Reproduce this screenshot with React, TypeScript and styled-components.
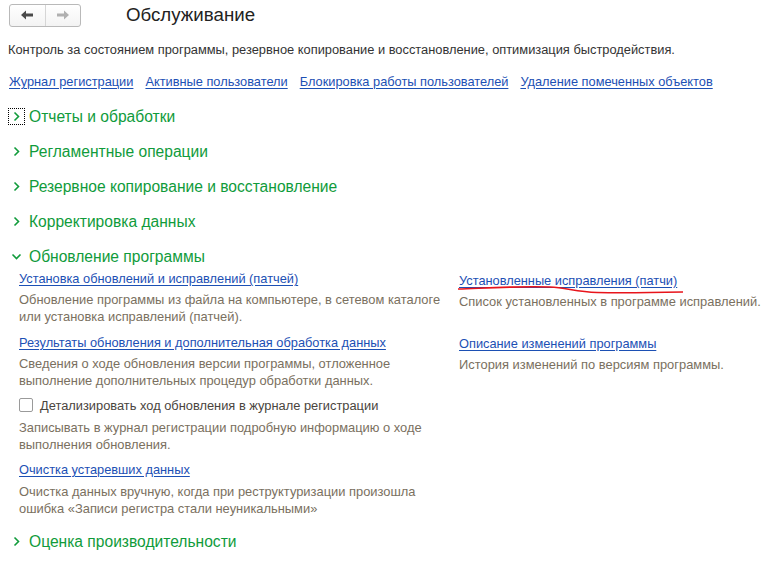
import React from "react";
import styled, { createGlobalStyle } from "styled-components";

const Global = createGlobalStyle`
  html, body { margin: 0; padding: 0; background: #fff; }
  body { font-family: Arial, "Liberation Sans", sans-serif; color: #333; }
`;

const Page = styled.div`
  width: 772px;
  height: 567px;
  overflow: hidden;
  position: relative;
  box-sizing: border-box;
  padding: 3px 0 0 8px;
`;

const Header = styled.div`
  display: flex;
  align-items: center;
  height: 24px;
`;

const NavGroup = styled.div`
  display: flex;
  width: 72px;
  height: 23px;
  margin-left: 1px;
  border: 1px solid #b9b9b9;
  border-radius: 3px;
  box-sizing: border-box;
  background: linear-gradient(#ffffff, #f3f3f3);
`;

const NavBtn = styled.div<{ $divider?: boolean }>`
  flex: 1;
  display: flex;
  align-items: center;
  justify-content: center;
  border-left: ${(p) => (p.$divider ? "1px solid #d6d6d6" : "none")};
`;

const Title = styled.div`
  margin-left: 45px;
  font-size: 18.7px;
  color: #222;
  line-height: 24px;
`;

const Intro = styled.div`
  margin-top: 15px;
  font-size: 12.85px;
  color: #333;
  line-height: 16px;
`;

const LinkRow = styled.div`
  display: flex;
  gap: 12px;
  margin-top: 16px;
  margin-left: 1px;
`;

const Link = styled.a`
  font-size: 12.8px;
  color: #1c50b4;
  text-decoration: underline;
  text-underline-offset: 2px;
  line-height: 16px;
  cursor: pointer;
  white-space: nowrap;
`;

const Groups = styled.div`
  margin-top: 9px;
  display: flex;
  flex-direction: column;
`;

const GroupHeader = styled.div`
  display: flex;
  align-items: center;
  height: 35px;
`;

const Chevron = styled.span<{ $focus?: boolean }>`
  width: 17px;
  height: 17px;
  display: flex;
  align-items: center;
  justify-content: center;
  margin-right: 4px;
  box-sizing: border-box;
  border: ${(p) => (p.$focus ? "1px dotted #000" : "1px solid transparent")};
`;

const GroupTitle = styled.span`
  font-size: 15.6px;
  color: #109b3b;
  line-height: 20px;
`;

const Expanded = styled.div`
  display: grid;
  grid-template-columns: 440px 1fr;
  padding-left: 11px;
  margin-top: -3px;
`;

const Column = styled.div`
  display: flex;
  flex-direction: column;
`;

const Item = styled.div<{ $gap?: number }>`
  display: flex;
  flex-direction: column;
  margin-bottom: ${(p) => p.$gap ?? 10}px;
`;

const Desc = styled.div<{ $top?: number }>`
  font-size: 12.9px;
  line-height: 17px;
  color: #7a7060;
  margin-top: ${(p) => p.$top ?? 4}px;
`;

const CheckRow = styled.label`
  display: flex;
  align-items: center;
  gap: 7px;
  height: 18px;
`;

const Box = styled.span`
  width: 14px;
  height: 14px;
  border: 1px solid #9a9a9a;
  border-radius: 2px;
  background: #fff;
  box-sizing: border-box;
`;

const CheckLabel = styled.span`
  font-size: 12.85px;
  color: #4a453e;
`;

const AnnotatedLink = styled.div`
  position: relative;
  display: inline-block;
  align-self: flex-start;
`;

const Squiggle = styled.svg`
  position: absolute;
  left: -2px;
  top: 10px;
  pointer-events: none;
`;

const Arrow = ({ color, dir }: { color: string; dir: "l" | "r" }) => (
  <svg width="14" height="10" viewBox="0 0 14 10">
    {dir === "l" ? (
      <path d="M1 5 L6 0.5 L6 3.5 L13 3.5 L13 6.5 L6 6.5 L6 9.5 Z" fill={color} />
    ) : (
      <path d="M13 5 L8 0.5 L8 3.5 L1 3.5 L1 6.5 L8 6.5 L8 9.5 Z" fill={color} />
    )}
  </svg>
);

const ChevronIcon = ({ open }: { open?: boolean }) => (
  <svg width="11" height="11" viewBox="0 0 11 11">
    {open ? (
      <path d="M1.5 3.5 L5.5 7.5 L9.5 3.5" fill="none" stroke="#109b3b" strokeWidth="1.6" />
    ) : (
      <path d="M3.5 1.5 L7.5 5.5 L3.5 9.5" fill="none" stroke="#109b3b" strokeWidth="1.6" />
    )}
  </svg>
);

const Group = ({ title, focus, open }: { title: string; focus?: boolean; open?: boolean }) => (
  <GroupHeader>
    <Chevron $focus={focus}>
      <ChevronIcon open={open} />
    </Chevron>
    <GroupTitle>{title}</GroupTitle>
  </GroupHeader>
);

export default function App() {
  return (
    <>
      <Global />
      <Page>
        <Header>
          <NavGroup>
            <NavBtn>
              <Arrow color="#4a4a4a" dir="l" />
            </NavBtn>
            <NavBtn $divider>
              <Arrow color="#b0b0b0" dir="r" />
            </NavBtn>
          </NavGroup>
          <Title>Обслуживание</Title>
        </Header>
        <Intro>
          Контроль за состоянием программы, резервное копирование и восстановление, оптимизация быстродействия.
        </Intro>
        <LinkRow>
          <Link>Журнал регистрации</Link>
          <Link>Активные пользователи</Link>
          <Link>Блокировка работы пользователей</Link>
          <Link>Удаление помеченных объектов</Link>
        </LinkRow>
        <Groups>
          <Group title="Отчеты и обработки" focus />
          <Group title="Регламентные операции" />
          <Group title="Резервное копирование и восстановление" />
          <Group title="Корректировка данных" />
          <Group title="Обновление программы" open />
          <Expanded>
            <Column>
              <Item>
                <Link>Установка обновлений и исправлений (патчей)</Link>
                <Desc>
                  Обновление программы из файла на компьютере, в сетевом каталоге
                  <br />
                  или установка исправлений (патчей).
                </Desc>
              </Item>
              <Item $gap={7}>
                <Link>Результаты обновления и дополнительная обработка данных</Link>
                <Desc>
                  Сведения о ходе обновления версии программы, отложенное
                  <br />
                  выполнение дополнительных процедур обработки данных.
                </Desc>
              </Item>
              <Item $gap={9}>
                <CheckRow>
                  <Box />
                  <CheckLabel>Детализировать ход обновления в журнале регистрации</CheckLabel>
                </CheckRow>
                <Desc $top={5}>
                  Записывать в журнал регистрации подробную информацию о ходе
                  <br />
                  выполнения обновления.
                </Desc>
              </Item>
              <Item $gap={7}>
                <Link>Очистка устаревших данных</Link>
                <Desc $top={5}>
                  Очистка данных вручную, когда при реструктуризации произошла
                  <br />
                  ошибка «Записи регистра стали неуникальными»
                </Desc>
              </Item>
            </Column>
            <Column>
              <Item $gap={26}>
                <AnnotatedLink>
                  <Link>Установленные исправления (патчи)</Link>
                  <Squiggle width="230" height="14" viewBox="0 0 230 14">
                    <path
                      d="M1 8 C 30 7, 60 5, 93 6 C 110 7, 120 11, 140 11.5 C 170 12, 200 11.5, 226 11"
                      fill="none"
                      stroke="#e8141b"
                      strokeWidth="1.6"
                    />
                  </Squiggle>
                </AnnotatedLink>
                <Desc>Список установленных в программе исправлений.</Desc>
              </Item>
              <Item>
                <Link>Описание изменений программы</Link>
                <Desc>История изменений по версиям программы.</Desc>
              </Item>
            </Column>
          </Expanded>
          <Group title="Оценка производительности" />
        </Groups>
      </Page>
    </>
  );
}
